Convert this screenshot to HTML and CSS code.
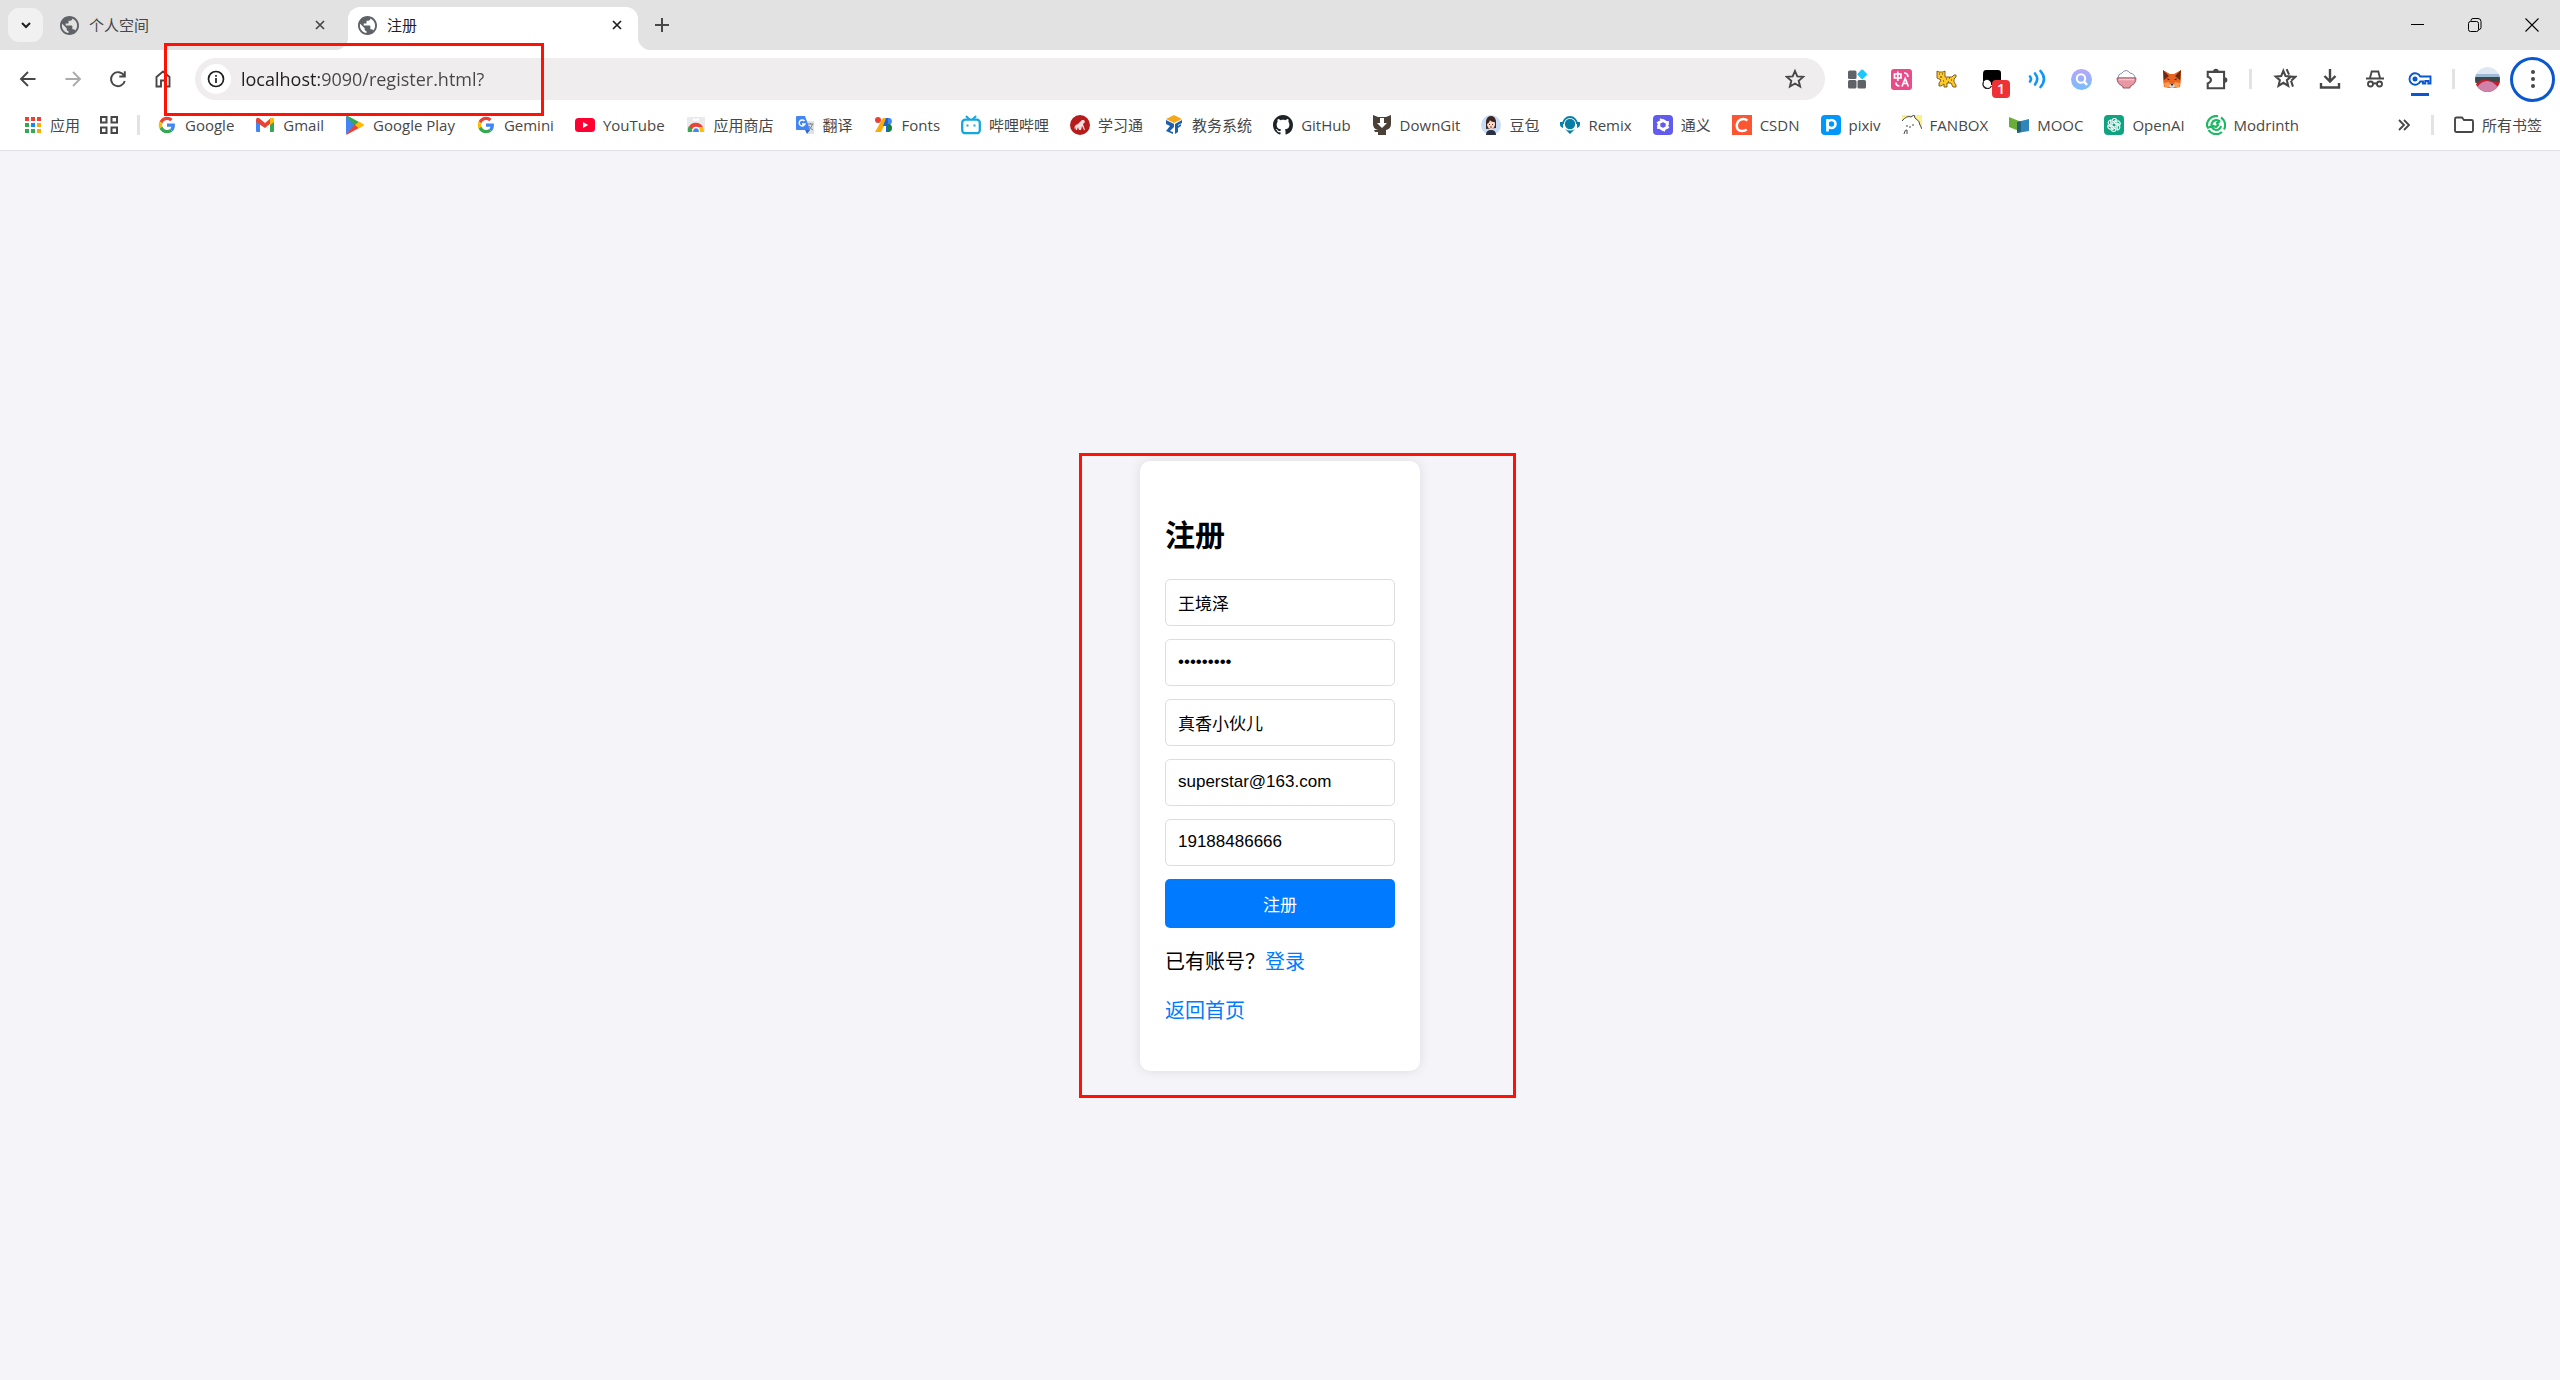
FILE: index.html
```html
<!DOCTYPE html>
<html lang="zh-CN">
<head>
<meta charset="utf-8">
<meta name="viewport" content="width=device-width, initial-scale=1">
<title>注册</title>
<link rel="stylesheet" href="styles.css">
</head>
<body>
<svg class="defs" aria-hidden="true">
  <symbol id="globe" viewBox="2 2 20 20"><path fill="#5f6368" d="M12 2C6.48 2 2 6.48 2 12s4.48 10 10 10 10-4.48 10-10S17.52 2 12 2zm-1 17.93c-3.95-.49-7-3.85-7-7.93 0-.62.08-1.21.21-1.79L9 15v1c0 1.1.9 2 2 2v1.93zm6.9-2.54c-.26-.81-1-1.39-1.9-1.39h-1v-3c0-.55-.45-1-1-1H8v-2h2c.55 0 1-.45 1-1V7h2c1.1 0 2-.9 2-2v-.41c2.93 1.19 5 4.06 5 7.41 0 2.08-.8 3.97-2.1 5.39z"/></symbol>
  <symbol id="g" viewBox="-5 -5 58 58"><path fill="#ea4335" d="M24 9.5c3.54 0 6.71 1.22 9.21 3.6l6.85-6.85C35.9 2.38 30.47 0 24 0 14.62 0 6.51 5.38 2.56 13.22l7.98 6.19C12.43 13.72 17.74 9.5 24 9.5z"/><path fill="#4285f4" d="M46.98 24.55c0-1.57-.15-3.09-.38-4.55H24v9.02h12.94c-.58 2.96-2.26 5.48-4.78 7.18l7.73 6c4.51-4.18 7.09-10.36 7.09-17.65z"/><path fill="#fbbc05" d="M10.53 28.59c-.48-1.45-.76-2.99-.76-4.59s.27-3.14.76-4.59l-7.98-6.19C.92 16.46 0 20.12 0 24c0 3.88.92 7.54 2.56 10.78l7.97-6.19z"/><path fill="#34a853" d="M24 48c6.48 0 11.93-2.13 15.89-5.81l-7.73-6c-2.15 1.45-4.92 2.3-8.16 2.3-6.26 0-11.57-4.22-13.47-9.91l-7.98 6.19C6.51 42.62 14.62 48 24 48z"/></symbol>
  <symbol id="x" viewBox="0 0 10 10"><path d="M1 1l8 8M9 1L1 9" fill="none" stroke="currentColor" stroke-width="1.7"/></symbol>
</svg>

<header class="browser">
  <div class="tabstrip">
    <button class="tab-search" aria-label="搜索标签页"><svg width="10" height="8" viewBox="0 0 10 8"><path d="M1 2l4 4 4-4" fill="none" stroke="#1f1f1f" stroke-width="2"/></svg></button>
    <div class="tab">
      <svg class="favicon" width="19" height="19"><use href="#globe"/></svg>
      <span class="tab-title">个人空间</span>
      <button class="tab-close" aria-label="关闭"><svg width="10" height="10"><use href="#x"/></svg></button>
    </div>
    <div class="tab active">
      <svg class="favicon" width="19" height="19"><use href="#globe"/></svg>
      <span class="tab-title">注册</span>
      <button class="tab-close" aria-label="关闭"><svg width="10" height="10"><use href="#x"/></svg></button>
    </div>
    <button class="new-tab" aria-label="打开新的标签页"><svg width="14" height="14" viewBox="0 0 14 14"><path d="M7 0v14M0 7h14" stroke="#474747" stroke-width="2"/></svg></button>
    <div class="window-controls">
      <button aria-label="最小化"><svg width="14" height="14" viewBox="0 0 14 14"><path d="M0 6.5h13" stroke="#000"/></svg></button>
      <button aria-label="还原"><svg width="14" height="14" viewBox="0 0 14 14"><path d="M3 3.500V2.500q0-2 2-2h5q3 0 3 3v6q0 2-2 2" fill="none" stroke="#000"/><rect x=".5" y="3.500" width="10" height="10" rx="2" fill="none" stroke="#000"/></svg></button>
      <button aria-label="关闭窗口"><svg width="14" height="14" viewBox="0 0 14 14"><path d="M.5.5l13 13M13.500.5l-13 13" stroke="#000" stroke-width="1.100"/></svg></button>
    </div>
  </div>

  <div class="toolbar">
    <button class="tool" aria-label="后退"><svg width="20" height="20" viewBox="0 0 20 20"><path d="M17.500 10H3.500M10 3l-7 7 7 7" class="line"/></svg></button>
    <button class="tool off" aria-label="前进"><svg width="20" height="20" viewBox="0 0 20 20"><path d="M2.500 10h14M10 3l7 7-7 7" class="line"/></svg></button>
    <button class="tool" aria-label="重新加载"><svg width="20" height="20" viewBox="0 0 20 20"><path d="M16 6.500A7 7 0 1 0 16.800 12M16.800 2.200V7.500h-5.500" class="line"/></svg></button>
    <button class="tool" aria-label="主页"><svg width="20" height="20" viewBox="0 0 20 20"><path d="M3.500 17.500V8L10 2.500 16.500 8v9.500h-4.500v-6H8v6z" class="line"/></svg></button>
    <div class="omnibox">
      <button class="site-info" aria-label="查看网站信息"><svg width="18" height="18" viewBox="0 0 18 18"><circle cx="9" cy="9" r="7.500" fill="none" stroke="#1f1f1f" stroke-width="1.700"/><path d="M9 8v5M9 5v1.800" stroke="#1f1f1f" stroke-width="1.700"/></svg></button>
      <input class="url" type="text" aria-label="地址" value="localhost:9090/register.html?">
      <button class="bookmark-star" aria-label="收藏"><svg width="20" height="20" viewBox="0 0 20 20"><path d="M10 2l2.300 5.400 5.900.5-4.500 3.900 1.400 5.700-5.100-3-5.100 3 1.400-5.700L1.800 7.900l5.900-.5z" class="line"/></svg></button>
    </div>
    <button class="tool" aria-label="扩展一"><svg width="20" height="20" viewBox="0 0 20 20"><g fill="#5f6368"><rect x="1" y="1.500" width="8.500" height="8.500" rx="1.500"/><rect x="1" y="11" width="8.500" height="8.500" rx="1.500"/><rect x="10.500" y="11" width="8.500" height="8.500" rx="1.500"/></g><rect x="11.500" y="1.500" width="7.500" height="7.500" rx="1.200" transform="rotate(45 15.200 5.200)" fill="#18c8ff"/></svg></button>
    <button class="tool" aria-label="翻译扩展"><svg width="21" height="21" viewBox="0 0 21 21"><rect width="21" height="21" rx="3" fill="#ea4c89"/><path d="M3.500 5h6.500v4H3.500zM6.800 2.500v9.500M13 4q4 0 4 4M5 13.500q0 3.500 3.500 3.500M11 17.500l3.200-8 3.200 8M12 14.500h4.500" fill="none" stroke="#fff" stroke-width="1.700"/></svg></button>
    <button class="tool" aria-label="小猫"><svg width="21" height="18" viewBox="0 0 21 18"><path d="M1 1l2 1h4l2-1v6h7l2-2h2v2l-2 2v3l2 3v2h-3l-2-4h-4v4H8v-3l-3 2H3v-3l2-3-4-2z" fill="#fccb27" stroke="#75501e" stroke-width=".9"/><path d="M3 4h1M6 4h1M4 7h2M10 9h1M13 8h1M15 10h1M12 12h1M7 11h1" stroke="#54320e" stroke-width="1.200"/></svg></button>
    <button class="tool badge-host" aria-label="脚本管理"><svg width="20" height="20" viewBox="0 0 20 20"><path d="M4 1h12q3 0 3 3v12H9a4 4 0 1 0-8-2V5q0-4 3-4z" fill="#000"/><path d="M1.500 13a4 4 0 1 0 8 4" fill="none" stroke="#222" stroke-width="1.400"/></svg><span class="badge">1</span></button>
    <button class="tool" aria-label="朗读"><svg width="20" height="20" viewBox="0 0 20 20"><path d="M3 7.500q2 2.500 0 5M8 4.500q4.500 5.500 0 11M13.500 2q7 8 0 16" fill="none" stroke="#1296f5" stroke-width="2.600" stroke-linecap="round"/></svg></button>
    <button class="tool" aria-label="搜索扩展"><svg width="21" height="21" viewBox="0 0 21 21"><defs><linearGradient id="sg" x2="0" y2="1"><stop stop-color="#b7a7f8"/><stop offset="1" stop-color="#78bdfc"/></linearGradient></defs><circle cx="10.500" cy="10.500" r="10.500" fill="url(#sg)"/><circle cx="10" cy="9.500" r="4.200" fill="none" stroke="#fff" stroke-width="2"/><path d="M13 12.500l3 3.500" stroke="#fff" stroke-width="2.500"/></svg></button>
    <button class="tool" aria-label="饭碗"><svg width="21" height="20" viewBox="0 0 21 20"><path d="M2 9q0-4 4-5 4-5 8 0 5 1 5 5z" fill="#fff" stroke="#8a91ac" stroke-width="1"/><path d="M1 9h19q0 6-6 8.500v1.500H7v-1.500Q1 15 1 9z" fill="#e898a3" stroke="#8b4b5d" stroke-width=".9"/><path d="M3 10.500h15" stroke="#f7c5cc" stroke-width="1.500"/></svg></button>
    <button class="tool" aria-label="钱包"><svg width="20" height="20" viewBox="0 0 20 20"><path d="M1 1l7 4h4l7-4v9l-1 8-5 1H7l-5-1-1-8z" fill="#e8641f"/><path d="M1 1l6 6-5 4zM19 1l-6 6 5 4z" fill="#6d2a12"/><path d="M2 14l5-1 2 5H3zM18 14l-5-1-2 5h6z" fill="#ff9b50"/><path d="M5 9l3 2H6zM15 9l-3 2h2z" fill="#222"/><path d="M8 15h4l1 3-3 1-3-1z" fill="#dfd3cc"/><path d="M8.500 15h3l-1.500 2z" fill="#222"/></svg></button>
    <button class="tool" aria-label="扩展程序"><svg width="24" height="24" viewBox="0 0 22 22"><path d="M2.500 4.500h15v15h-15v-4.500q3-1 3-3t-3-3z" class="line"/><path d="M7.500 4a2.500 2.500 0 0 1 5 0zM18 9.500a2.500 2.500 0 0 1 0 5z" fill="#474747"/></svg></button>
    <span class="divider"></span>
    <button class="tool" aria-label="收藏夹"><svg width="24" height="24" viewBox="0 0 22 22"><path d="M9.500 3.500l2 4.800 5 .5-3.800 3.300 1.200 5.100-4.400-2.700-4.400 2.700 1.200-5.100L2.500 8.800l5-.5zM12.500 2l2.200 5M15 9h5.500l-3.800 3.600M16.500 12.500l1.800 5.500" class="line"/></svg></button>
    <button class="tool" aria-label="下载"><svg width="22" height="22" viewBox="0 0 22 22"><path d="M11 1v12M5.500 8l5.500 5.500L16.500 8M2 15v4.500h18V15" class="line heavy"/></svg></button>
    <button class="tool" aria-label="无痕模式"><svg width="20" height="20" viewBox="0 0 20 20"><path d="M5 9l1.700-6.500h6.600L15 9M1 9.500h18" class="line"/><circle cx="5.500" cy="15" r="2.500" class="line"/><circle cx="14.500" cy="15" r="2.500" class="line"/><path d="M8 15q2-1.500 4 0" class="line"/></svg></button>
    <button class="tool key" aria-label="密码管理"><svg width="24" height="16" viewBox="0 0 24 16"><path d="M12.300 5.500H22.500v7h-2.200v-2.500h-3V12.500h-2.300V10.500h-2.700A5.700 5.700 0 1 1 12.300 5.500z" fill="none" stroke="#0b57d0" stroke-width="1.900"/><circle cx="7" cy="8" r="2.500" fill="#0b57d0"/></svg></button>
    <span class="divider"></span>
    <button class="tool" aria-label="个人资料"><svg width="25" height="25" viewBox="0 0 25 25"><defs><clipPath id="av"><circle cx="12.500" cy="12.500" r="12.500"/></clipPath></defs><g clip-path="url(#av)"><path fill="#dfe8f2" d="M0 0h25v10H0z"/><path fill="#9eb9d3" d="M0 7h25v3H0z"/><path fill="#374a4d" d="M0 10h25v6H0z"/><path fill="#c51f2d" d="M0 18Q7 11 13 13t12 2v10H0z"/><path fill="#d182a8" d="M2 20Q12 8 23 20v5H2z"/></g></svg></button>
    <button class="tool menu" aria-label="菜单"><svg width="4" height="18" viewBox="0 0 4 18"><g fill="#474747"><circle cx="2" cy="2" r="2"/><circle cx="2" cy="9" r="2"/><circle cx="2" cy="16" r="2"/></g></svg></button>
  </div>

  <nav class="bookmarks" aria-label="书签栏">
    <a href="#" class="mark apps"><svg width="18" height="18" viewBox="0 0 18 18"><g fill="#ea4335"><path d="M1 1h4v4H1zM7 1h4v4H7zM13 1h4v4h-4z"/></g><path fill="#34a853" d="M1 7h4v4H1zM1 13h4v4H1zM7 13h4v4H7z"/><path fill="#1a85f4" d="M7 7h4v4H7z"/><path fill="#fbab06" d="M13 7h4v4h-4zM13 13h4v4h-4z"/></svg>应用</a>
    <button class="groups" aria-label="标签页分组"><svg width="18" height="18" viewBox="0 0 18 18"><path d="M1 1h5.500v5.500H1zM11.500 1H17v5.500h-5.500zM1 11.500h5.500V17H1zM11.500 11.500H17V17h-5.500z" fill="none" stroke="#474747" stroke-width="2"/></svg></button>
    <span class="divider"></span>
    <div class="links">
    <a href="#" class="mark"><svg viewBox="0 0 20 20"><use href="#g"/></svg>Google</a>
    <a href="#" class="mark"><svg viewBox="0 0 20 20"><path fill="#4285f4" d="M1 5l4 3v9H2q-1 0-1-1z"/><path fill="#34a853" d="M19 5l-4 3v9h3q1 0 1-1z"/><path fill="#ea4335" d="M1 5q0-3 3-2l6 5 6-5v5l-6 5-9-6z"/><path fill="#fbbc04" d="M15 4q4-3 4 1v2l-4 3z"/></svg>Gmail</a>
    <a href="#" class="mark"><svg viewBox="0 0 20 20"><path fill="#4285f4" d="M1 1l10 9L1 19z"/><path fill="#34a853" d="M1 1q1-1 2 0l11 6-4 4z"/><path fill="#ea4335" d="M1 19q1 1 2 0l11-6-4-4z"/><path fill="#fbbc04" d="M14 6.500l5 3v1l-5 3-4-3.500z"/></svg>Google Play</a>
    <a href="#" class="mark"><svg viewBox="0 0 20 20"><use href="#g"/></svg>Gemini</a>
    <a href="#" class="mark"><svg viewBox="0 0 20 20"><rect y="3" width="20" height="14" rx="3.500" fill="#ff0033"/><path d="M8 7l5.200 3L8 13z" fill="#fff"/></svg>YouTube</a>
    <a href="#" class="mark"><svg viewBox="0 0 20 20"><path fill="#e8eaec" d="M1 2h18v15H1z"/><path d="M7 4q3 2 6 0" fill="none" stroke="#fff" stroke-width="2"/><path d="M2 17a8 8 0 0 1 15-5h-7z" fill="#ea4335"/><path d="M2 17q-1-3 1-6l5 6z" fill="#34a853"/><path d="M11 12h6q1 2 1 5h-7z" fill="#fbbc04"/><circle cx="10" cy="15.500" r="3.800" fill="#fff"/><path d="M7.200 17a2.900 2.900 0 1 1 5.600 0z" fill="#4285f4"/></svg>应用商店</a>
    <a href="#" class="mark"><svg viewBox="0 0 20 20"><path fill="#dfe2e6" d="M9 6h10v13h-7z"/><path fill="#4285f4" d="M2 1h8l5 14H2q-1 0-1-1V2q0-1 1-1z"/><path fill="#3267d6" d="M10 15h5l-3 4z"/><path d="M9.500 6a3 3 0 1 0 .5 3H7" fill="none" stroke="#fff" stroke-width="1.400"/><path d="M12.500 9h6M15.500 8v1M17.500 9q-1 4-4 6M14 11q1.500 3 4 4" fill="none" stroke="#7b8086" stroke-width="1"/></svg>翻译</a>
    <a href="#" class="mark"><svg viewBox="0 0 20 20"><circle cx="4" cy="5" r="3" fill="#ea4335"/><path d="M9 3h5L7 17H1z" fill="#fbab06"/><path d="M12 3h3v14h-3v-6l-3 0z" fill="#1a66d6"/><path d="M14 3h2q4 3 0 7h-2z" fill="#4285f4"/><path d="M14 9a4 4 0 1 1 0 8z" fill="#188038"/></svg>Fonts</a>
    <a href="#" class="mark"><svg viewBox="0 0 20 20"><path d="M5.500 1.500L8 4M14.500 1.500L12 4" stroke="#13a7de" stroke-width="2" stroke-linecap="round"/><rect x="1.200" y="4.700" width="17.600" height="13.500" rx="3" fill="#fff" stroke="#13a7de" stroke-width="2.300"/><path d="M6.500 9.500v2M13.500 9.500v2" stroke="#13a7de" stroke-width="2"/></svg>哔哩哔哩</a>
    <a href="#" class="mark"><svg viewBox="0 0 20 20"><circle cx="10" cy="10" r="10" fill="#b71c1c"/><path d="M4 15q0-5 4-6l4-4 2 0 1 2-2 2 2 6h-1l-2-4-1 4H9l-1-3-1 3H6l-1-3-1 3z" fill="#f5dede"/></svg>学习通</a>
    <a href="#" class="mark"><svg viewBox="0 0 20 20"><path d="M10 0l8 4-8 4-8-4z" fill="#f5a81c"/><path d="M2 5l8 4v3l-4 4 3 1v2l-7-3 4-5-4-2zM18 5l-7 4v10l3-2v-4l3-2V9l-3 2v-1l4-2z" fill="#1c5fae"/></svg>教务系统</a>
    <a href="#" class="mark"><svg viewBox="0 0 16 16"><path fill="#1f2328" d="M8 0C3.580 0 0 3.580 0 8c0 3.540 2.290 6.530 5.470 7.590.4.070.55-.17.55-.38 0-.19-.01-.82-.01-1.490-2.010.37-2.530-.49-2.690-.94-.09-.23-.48-.94-.82-1.130-.28-.15-.68-.52-.01-.53.63-.01 1.080.58 1.230.82.72 1.210 1.870.87 2.330.66.07-.52.28-.87.51-1.070-1.780-.2-3.640-.89-3.640-3.950 0-.87.31-1.590.82-2.150-.08-.2-.36-1.020.08-2.120 0 0 .67-.21 2.200.82.64-.18 1.320-.27 2-.27s1.360.09 2 .27c1.530-1.040 2.200-.82 2.200-.82.44 1.100.16 1.920.08 2.120.51.56.82 1.270.82 2.150 0 3.070-1.870 3.750-3.650 3.950.29.25.54.73.54 1.480 0 1.070-.01 1.930-.01 2.200 0 .21.15.46.55.38A8.010 8.010 0 0 0 16 8c0-4.420-3.580-8-8-8z"/></svg>GitHub</a>
    <a href="#" class="mark"><svg viewBox="0 0 20 20"><path d="M1 0l5 2h8l5-2v9q0 5-5 6v5H6v-3H3l-1-2h4Q1 14 1 9z" fill="#4a4038"/><path d="M8 3h4v5h3l-5 5-5-5h3z" fill="#fff"/></svg>DownGit</a>
    <a href="#" class="mark"><svg viewBox="0 0 20 20"><circle cx="10" cy="10" r="10" fill="#c8dcf6"/><path d="M5 14V6q1-5 5-5t5 5v7z" fill="#3c2623"/><ellipse cx="10" cy="9" rx="4" ry="5" fill="#fbd9c7"/><path d="M5 9q1-6 5-6t4 4q-4 0-5-2-1 4-4 4z" fill="#3c2623"/><path d="M5 20q0-5 5-5t5 5z" fill="#283041"/><path d="M8 9.500h1M11 9.500h1M9 12h2" stroke="#682f2f"/></svg>豆包</a>
    <a href="#" class="mark"><svg viewBox="0 0 20 20"><path d="M3 9a7 7 0 0 1 14 0" fill="none" stroke="#087ea4" stroke-width="1.800"/><circle cx="10" cy="9" r="5.200" fill="#087ea4"/><path d="M0 7h3v6Q0 12 0 10zM20 7h-3v6q3-1 3-3zM5 14q5 3 10 0l-5 5z" fill="#087ea4"/></svg>Remix</a>
    <a href="#" class="mark"><svg viewBox="0 0 20 20"><rect width="20" height="20" rx="4" fill="#615ced"/><path d="M10 5.500l4 2.300v4.400l-4 2.300-4-2.300V7.800z" fill="none" stroke="#fff" stroke-width="2.600"/><path d="M7 4l4 2M15 6l0 4M16 12l-4 2M12 16l-4-2M5 14v-4M4 8l4-2" stroke="#fff" stroke-width="1.600" fill="none"/></svg>通义</a>
    <a href="#" class="mark"><svg viewBox="0 0 20 20"><path fill="#fc5531" d="M0 0h20v20H0z"/><path d="M15.500 5.500Q13 3.700 10 4.200 5.500 5 4.800 10q-.3 6 5.200 6 3 0 4.700-1.500" fill="none" stroke="#fff" stroke-width="2.500"/></svg>CSDN</a>
    <a href="#" class="mark"><svg viewBox="0 0 20 20"><rect width="20" height="20" rx="4" fill="#0096fa"/><circle cx="10.500" cy="9" r="4" fill="none" stroke="#fff" stroke-width="2.600"/><path d="M6.500 4v12.500" stroke="#fff" stroke-width="2.600"/></svg>pixiv</a>
    <a href="#" class="mark"><svg viewBox="0 0 20 20"><path fill="#faf18a" d="M0 0h20v14H0z"/><path d="M0 6q5-5 9-4l3-2 1 3q4 2 5 7l2 4v6H0z" fill="#fff"/><path d="M0 6q5-6 9-4l3-2 1 3q5 3 5 7l2 4M2 19q1-5 3-4v4M5 10v2M11 9v2M7 12h2" fill="none" stroke="#484848" stroke-width="1"/></svg>FANBOX</a>
    <a href="#" class="mark"><svg viewBox="0 0 20 20"><path d="M0 2l10 4v10L0 12z" fill="#6aae38"/><path d="M8 7l12-3v12L8 18z" fill="#2e86ba"/><path d="M8 7l4-1v11l-4 1z" fill="#23637a"/></svg>MOOC</a>
    <a href="#" class="mark"><svg viewBox="0 0 20 20"><rect width="20" height="20" rx="4" fill="#10a37f"/><g fill="none" stroke="#fff" stroke-width="1.100"><path id="petal" d="M8 11.200V6q0-2.500 2.500-2.500 1.500 0 2.200 1.200L8.800 7"/><use href="#petal" transform="rotate(60 10 10)"/><use href="#petal" transform="rotate(120 10 10)"/><use href="#petal" transform="rotate(180 10 10)"/><use href="#petal" transform="rotate(240 10 10)"/><use href="#petal" transform="rotate(300 10 10)"/></g></svg>OpenAI</a>
    <a href="#" class="mark"><svg viewBox="0 0 20 20"><g fill="none" stroke="#1bb963" stroke-width="2.200"><path d="M12 1.300A9 9 0 0 0 1.200 12M2.500 15A9 9 0 0 0 16 17M18 14.500A9 9 0 0 0 15 2.500"/><path d="M14 6.500A5 5 0 1 0 10 15q4 0 5-4M1 13l6-2 3 1 2-2-1-2 3-2"/></g></svg>Modrinth</a>
    </div>
    <button class="more" aria-label="更多书签"><svg width="12" height="12" viewBox="0 0 12 12"><path d="M1 1l5 5-5 5M6 1l5 5-5 5" fill="none" stroke="#474747" stroke-width="1.800"/></svg></button>
    <span class="divider"></span>
    <a href="#" class="mark all"><svg viewBox="0 0 20 20"><path d="M1 4q0-1.500 1.500-1.500H8l2 2.500h7.500Q19 5 19 6.500v9q0 1.500-1.500 1.500h-15Q1 17 1 15.500z" fill="none" stroke="#474747" stroke-width="1.900"/></svg>所有书签</a>
  </nav>
  <div class="outline outline-url"></div>
</header>

<main class="page">
  <section class="card">
    <h2>注册</h2>
    <form>
      <input type="text" aria-label="用户名" value="王境泽">
      <input type="password" aria-label="密码" value="123456789">
      <input type="text" aria-label="昵称" value="真香小伙儿">
      <input type="email" aria-label="邮箱" value="superstar@163.com">
      <input type="tel" aria-label="电话" value="19188486666">
      <button type="submit">注册</button>
    </form>
    <p>已有账号？<a href="#">登录</a></p>
    <p><a href="#">返回首页</a></p>
    <div class="outline outline-card"></div>
  </section>
</main>
</body>
</html>
```
FILE: styles.css
```css
* { box-sizing: border-box; }

body {
  margin: 0;
  min-height: 100vh;
  display: flex;
  flex-direction: column;
  background: #f4f4f9;
  font-family: "Liberation Sans", "Noto Sans CJK SC", sans-serif;
}

button {
  display: flex;
  align-items: center;
  justify-content: center;
  padding: 0;
  border: 0;
  background: none;
  font: inherit;
}

a { text-decoration: none; }
svg { flex: none; }
.defs { position: absolute; width: 0; height: 0; }

/* Browser chrome */
.browser {
  position: relative;
  background: #fff;
  border-bottom: 1px solid #e1e1e6;
  font-family: "Open Sans", "Noto Sans CJK SC", sans-serif;
}

.tabstrip {
  display: flex;
  height: 50px;
  padding-left: 8px;
  background: #e2e2e2;
}

.tab-search {
  width: 35px;
  height: 34px;
  margin: 8px 5px 0 0;
  border-radius: 11px;
  background: #f1f1f1;
}

.tab {
  display: flex;
  align-items: center;
  width: 300px;
  padding: 0 18px 0 12px;
  color: #474747;
}

.tab.active {
  position: relative;
  width: 290px;
  margin-top: 7px;
  padding: 0 11px 7px 10px;
  border-radius: 12px 12px 0 0;
  background: #fff;
  color: #1f1f1f;
}

.tab.active::before,
.tab.active::after {
  content: "";
  position: absolute;
  bottom: 0;
  width: 14px;
  height: 14px;
}
.tab.active::before { right: 100%; background: radial-gradient(circle at 0 0, transparent 14px, #fff 15px); }
.tab.active::after { left: 100%; background: radial-gradient(circle at 100% 0, transparent 14px, #fff 15px); }

.tab-title {
  flex: 1;
  margin-left: 10px;
  font-size: 15px;
  line-height: 20px;
}

.tab-close { width: 20px; height: 20px; color: inherit; }
.new-tab { width: 48px; }

.window-controls { display: flex; margin-left: auto; }
.window-controls button { width: 57px; }

.toolbar {
  display: flex;
  align-items: center;
  height: 58px;
  padding: 0 5px;
  border-radius: 10px 10px 0 0;
  background: #fff;
}

.tool { width: 45px; height: 45px; flex: none; }
.tool.off { opacity: 0.45; }
.line { fill: none; stroke: #474747; stroke-width: 1.9px; }
.line.heavy { stroke-width: 2.4px; }

.omnibox {
  flex: 1;
  display: flex;
  align-items: center;
  height: 42px;
  margin: 0 9px 0 10px;
  padding: 0 20px 0 6px;
  border-radius: 21px;
  background: #efedee;
}

.site-info {
  width: 30px;
  height: 30px;
  border-radius: 50%;
  background: #fff;
}

/* The host name is drawn darker than the rest of the address */
.url {
  flex: 1;
  min-width: 0;
  padding: 0;
  margin-left: 10px;
  border: 0;
  font: 18px/26px "Open Sans", sans-serif;
  color: #474747;
  background: linear-gradient(to right, #1f1f1f 78px, #474747 78px) text;
  -webkit-text-fill-color: transparent;
}

.badge-host { position: relative; }

.badge {
  position: absolute;
  left: 23px;
  top: 23px;
  width: 18px;
  height: 18px;
  border-radius: 4px;
  background: #ee3135;
  color: #fff;
  font-size: 14px;
  font-weight: 600;
  line-height: 18px;
}

.divider {
  flex: none;
  width: 3px;
  height: 20px;
  margin: 0 10px;
  background: #e3e3e3;
}

.key { position: relative; }
.key::after {
  content: "";
  position: absolute;
  left: 14px;
  bottom: 6px;
  width: 18px;
  height: 3px;
  background: #0b57d0;
}

.menu { border: 3px solid #0b57d0; border-radius: 50%; }

.bookmarks {
  display: flex;
  align-items: center;
  height: 42px;
  padding: 0 18px 8px 24px;
  color: #474747;
}

.links {
  flex: 1;
  min-width: 0;
  display: flex;
  gap: 21px;
  margin-left: 7px;
}

.mark {
  display: flex;
  align-items: center;
  gap: 8px;
  color: #474747;
  font-size: 15px;
  line-height: 20px;
  white-space: nowrap;
}
.mark svg { width: 20px; height: 20px; }
.mark.apps svg { width: 18px; height: 18px; }
.groups { margin: 0 9px 0 20px; }
.more { width: 34px; height: 20px; }
.all { margin-left: 10px; }

/* Red annotation frames */
.outline {
  position: absolute;
  border: 3px solid #ff1205;
  pointer-events: none;
}
.outline-url { left: 164px; top: 43px; width: 380px; height: 73px; }
.outline-card { left: -61px; top: -8px; width: 437px; height: 645px; }

/* Registration page */
.page {
  flex: 1;
  display: flex;
  align-items: center;
  justify-content: center;
}

.card {
  position: relative;
  width: 280px;
  padding: 25px;
  border-radius: 10px;
  background: #fff;
  box-shadow: 0 0 12px rgba(0, 0, 0, 0.1);
  color: #000;
}

.card h2 {
  margin: 28px 0 21px;
  font-size: 30px;
  line-height: 44px;
}

.card form {
  display: flex;
  flex-direction: column;
  gap: 13px;
}

.card input {
  width: 100%;
  height: 47px;
  padding: 0 12px;
  border: 1px solid #ddd;
  border-radius: 5px;
  background: #fff;
  color: #000;
  font: 17px "Liberation Sans", "Noto Sans CJK SC", sans-serif;
}

.card form button {
  height: 49px;
  border-radius: 5px;
  background: #007bff;
  color: #fff;
  font-size: 17px;
}

.card p {
  margin: 20px 0;
  font-size: 20px;
  line-height: 29px;
}

.card p a { color: #007bff; }
```
